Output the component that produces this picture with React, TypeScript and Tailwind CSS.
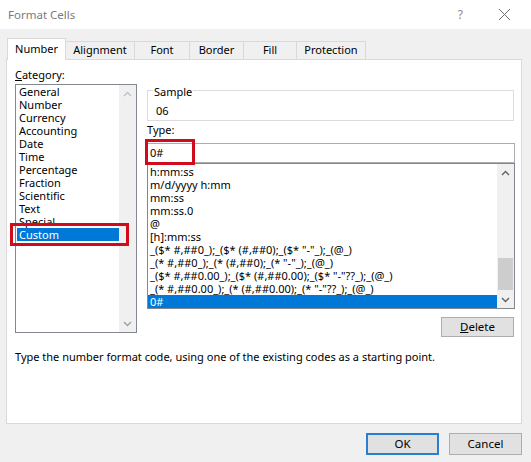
import React from 'react';

const categories = [
  'General',
  'Number',
  'Currency',
  'Accounting',
  'Date',
  'Time',
  'Percentage',
  'Fraction',
  'Scientific',
  'Text',
  'Special',
  'Custom',
];

const formats = [
  'h:mm:ss',
  'm/d/yyyy h:mm',
  'mm:ss',
  'mm:ss.0',
  '@',
  '[h]:mm:ss',
  '_($* #,##0_);_($* (#,##0);_($* "-"_);_(@_)',
  '_(* #,##0_);_(* (#,##0);_(* "-"_);_(@_)',
  '_($* #,##0.00_);_($* (#,##0.00);_($* "-"??_);_(@_)',
  '_(* #,##0.00_);_(* (#,##0.00);_(* "-"??_);_(@_)',
  '0#',
];

const tabs = [
  { label: 'Number', w: 'w-[59px]' },
  { label: 'Alignment', w: 'w-[69px]' },
  { label: 'Font', w: 'w-[55px]' },
  { label: 'Border', w: 'w-[54px]' },
  { label: 'Fill', w: 'w-[53px]' },
  { label: 'Protection', w: 'w-[69px]' },
];

const ChevronUp: React.FC<{ color?: string }> = ({ color = '#606060' }) => (
  <svg width="9" height="6" viewBox="0 0 9 6">
    <path d="M1 5 L4.5 1.5 L8 5" fill="none" stroke={color} strokeWidth="1.4" />
  </svg>
);

const ChevronDown: React.FC<{ color?: string }> = ({ color = '#606060' }) => (
  <svg width="9" height="6" viewBox="0 0 9 6">
    <path d="M1 1 L4.5 4.5 L8 1" fill="none" stroke={color} strokeWidth="1.4" />
  </svg>
);

const App: React.FC = () => {
  return (
    <div
      className="w-[531px] h-[462px] bg-[#f0f0f0] flex flex-col overflow-hidden text-[11px] text-black"
      style={{ fontFamily: '"Noto Sans", "Open Sans", sans-serif' }}
    >
      {/* title bar */}
      <div className="h-[29px] bg-white flex items-center pl-[8px]">
        <span className="text-[11.5px] text-[#7a7a7a]">Format Cells</span>
        <span className="ml-auto text-[12px] text-[#8a8a8a] mr-[35px]">?</span>
        <svg width="13" height="13" viewBox="0 0 13 13" className="mr-[20px]">
          <path d="M1 1 L12 12 M12 1 L1 12" stroke="#6d6d6d" strokeWidth="1" />
        </svg>
      </div>

      {/* tabs */}
      <div className="flex items-end pl-[7px] pt-[9px] h-[30px]">
        {tabs.map((t, i) =>
          i === 0 ? (
            <div
              key={t.label}
              className={`${t.w} h-[22px] -mb-px relative z-10 bg-white border border-b-0 border-[#d9d9d9] flex items-center justify-center`}
            >
              {t.label}
            </div>
          ) : (
            <div
              key={t.label}
              className={`${t.w} h-[18px] bg-[#f0f0f0] border border-b-0 border-l-0 border-[#d9d9d9] flex items-center justify-center`}
            >
              {t.label}
            </div>
          )
        )}
      </div>

      {/* panel */}
      <div className="ml-[6px] w-[516px] h-[365px] bg-white border border-[#d9d9d9] flex flex-col">
        <div className="flex pt-[7px]">
          {/* category column */}
          <div className="pl-[8px] w-[139px] flex flex-col">
            <div className="h-[16px] leading-[16px]">
              <span className="underline">C</span>ategory:
            </div>
            <div className="mt-[1px] w-[122px] h-[249px] border border-[#828790] flex">
              <div className="flex-1 flex flex-col">
                {categories.map((c) =>
                  c === 'Custom' ? (
                    <div key={c} className="relative h-[13px] leading-[13px] ml-[1px] pl-[2px] bg-[#0078d7] text-white">
                      {c}
                      <div className="absolute -left-[7px] -top-[5px] w-[119px] h-[23px] border-[3px] border-[#d10a1c]" />
                    </div>
                  ) : (
                    <div key={c} className="h-[13px] leading-[13px] pl-[3px]">
                      {c}
                    </div>
                  )
                )}
              </div>
              <div className="w-[17px] bg-[#f0f0f0] flex flex-col justify-between">
                <div className="h-[17px] flex items-center justify-center">
                  <ChevronUp color="#c2c2c2" />
                </div>
                <div className="h-[17px] flex items-center justify-center">
                  <ChevronDown color="#a0a0a0" />
                </div>
              </div>
            </div>
          </div>

          {/* right column */}
          <div className="ml-[1px] w-[368px] flex flex-col">
            <div className="relative mt-[23px] h-[31px] mr-[1px] border border-[#dcdcdc]">
              <span className="absolute left-[5px] -top-[7px] bg-white px-[1px] leading-[16px]">Sample</span>
              <div className="pl-[8px] pt-[12px] leading-[16px]">06</div>
            </div>
            <div className="mt-[1px] h-[16px] leading-[16px]">Type:</div>
            <div className="relative mt-[5px] h-[20px] border border-[#abadb3] flex items-center pl-[2px]">
              0#
              <div className="absolute -left-[3px] -top-[5px] w-[50px] h-[26px] border-[3px] border-[#d10a1c]" />
            </div>
            <div className="h-[146px] border border-[#828790] flex">
              <div className="flex-1 flex flex-col pt-[1px] overflow-hidden">
                {formats.map((f) =>
                  f === '0#' ? (
                    <div key={f} className="h-[13px] leading-[13px] pl-[2px] bg-[#0078d7] text-white whitespace-pre">
                      {f}
                    </div>
                  ) : (
                    <div key={f} className="h-[13px] leading-[13px] pl-[2px] whitespace-pre">
                      {f}
                    </div>
                  )
                )}
              </div>
              <div className="w-[17px] bg-[#f0f0f0] flex flex-col">
                <div className="h-[17px] flex items-center justify-center">
                  <ChevronUp />
                </div>
                <div className="flex-1 flex flex-col justify-end pb-[1px] px-[1px]">
                  <div className="h-[32px] bg-[#cdcdcd]" />
                </div>
                <div className="h-[17px] flex items-center justify-center">
                  <ChevronDown />
                </div>
              </div>
            </div>
            <div className="flex justify-end mt-[8px] mr-[1px]">
              <button className="w-[73px] h-[20px] bg-[#e1e1e1] border border-[#adadad] text-[11.5px] leading-none">
                <span className="underline">D</span>elete
              </button>
            </div>
          </div>
        </div>

        <div className="pl-[8px] mt-[12px] leading-[16px]">
          Type the number format code, using one of the existing codes as a starting point.
        </div>
      </div>

      {/* dialog buttons */}
      <div className="flex justify-end gap-[10px] pr-[9px] mt-[9px]">
        <button className="w-[73px] h-[22px] bg-[#e1e1e1] border-2 border-[#2a7fcf] text-[11.5px] leading-none">
          OK
        </button>
        <button className="w-[73px] h-[22px] bg-[#e1e1e1] border border-[#adadad] text-[11.5px] leading-none">
          Cancel
        </button>
      </div>
    </div>
  );
};

export default App;
